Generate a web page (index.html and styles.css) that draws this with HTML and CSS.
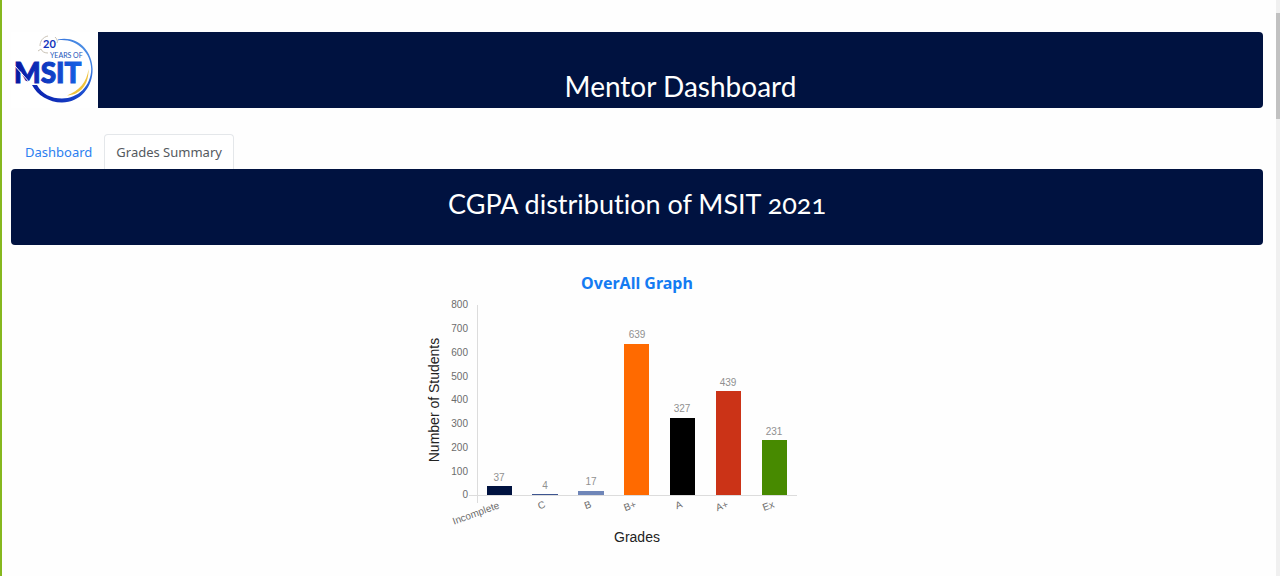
FILE: index.html
```html
<!DOCTYPE html>
<html lang="en">
<head>
<meta charset="utf-8">
<title>Mentor Dashboard</title>
<link rel="stylesheet" href="styles.css">
</head>
<body>
<main class="page">
  <header class="header">
    <svg class="logo" viewBox="11 32 87 76" role="img" aria-label="20 Years of MSIT">
      <defs>
        <linearGradient id="ring" x1="0" y1="1" x2="1" y2="0">
          <stop offset="0" stop-color="#0718a8"/>
          <stop offset="0.5" stop-color="#1c4fd0"/>
          <stop offset="1" stop-color="#5ba4ec"/>
        </linearGradient>
        <linearGradient id="word" x1="0" y1="0" x2="1" y2="0">
          <stop offset="0" stop-color="#0714a0"/>
          <stop offset="1" stop-color="#1763e6"/>
        </linearGradient>
      </defs>
      <path d="M58 39.400C77 35.500 92.300 50 92.600 69C93 87 80 102.500 62 102.500C49 102.500 37 95 32 85L37 85C42 94 51 98.500 62 98.500C78 98.500 91 86 91.200 69C91 52 76 38 58 40.200Z" fill="url(#ring)"/>
      <path d="M88.500 69C87 82 79 91 67 95.500C80 95 89 85 88.500 69Z" fill="#f0c33c"/>
      <path d="M40 46C40 41 43 37 48 36M55 37C57 39 58 41 57 43M41 49C42 52 45 53 48 53M38 51L41 49" fill="none" stroke="#c9c2b5" stroke-width="1"/>
      <text class="logo-number" x="43" y="48">20</text>
      <text class="logo-years" x="50" y="58">YEARS OF</text>
      <text class="logo-name" x="14" y="83" fill="url(#word)" stroke="url(#word)">MSIT</text>
      <path d="M15 66L30 83" stroke="#fff" stroke-width="1"/>
    </svg>
    <div class="banner banner-top"><h1 class="heading">Mentor Dashboard</h1></div>
  </header>
  <nav class="tabs" aria-label="Sections">
    <a class="tab" href="#dashboard">Dashboard</a>
    <a class="tab tab-active" href="#grades" aria-current="page">Grades Summary</a>
  </nav>
  <section id="grades">
    <div class="banner banner-section"><h2 class="heading heading-section">CGPA distribution of MSIT 2021</h2></div>
    <h3 class="graph-title">OverAll Graph</h3>
    <svg class="chart" viewBox="420 296 434 260" role="img" aria-label="Number of students by grade">
      <path d="M477 305V503M469 495H797" class="axis"/>
      <g class="tick">
        <text x="468" y="308">800</text>
        <text x="468" y="332">700</text>
        <text x="468" y="356">600</text>
        <text x="468" y="380">500</text>
        <text x="468" y="403">400</text>
        <text x="468" y="427">300</text>
        <text x="468" y="451">200</text>
        <text x="468" y="475">100</text>
        <text x="468" y="498">0</text>
      </g>
      <rect x="487" y="486" width="25" height="9" fill="#001240"/>
      <rect x="532" y="494" width="26" height="1" fill="#3d5590"/>
      <rect x="578" y="491" width="26" height="4" fill="#6f86b8"/>
      <rect x="624" y="344" width="25" height="151" fill="#ff6a00"/>
      <rect x="670" y="418" width="25" height="77" fill="#000"/>
      <rect x="716" y="391" width="25" height="104" fill="#cb3317"/>
      <rect x="762" y="440" width="25" height="55" fill="#478a00"/>
      <g class="value">
        <text x="499" y="481">37</text>
        <text x="545" y="489">4</text>
        <text x="591" y="485">17</text>
        <text x="637" y="338">639</text>
        <text x="682" y="412">327</text>
        <text x="728" y="386">439</text>
        <text x="774" y="435">231</text>
      </g>
      <g class="grade">
        <text transform="translate(500 508) rotate(-20)">Incomplete</text>
        <text transform="translate(546 507) rotate(-20)">C</text>
        <text transform="translate(592 507) rotate(-20)">B</text>
        <text transform="translate(637 507) rotate(-20)">B+</text>
        <text transform="translate(683 507) rotate(-20)">A</text>
        <text transform="translate(729 507) rotate(-20)">A+</text>
        <text transform="translate(775 507) rotate(-20)">Ex</text>
      </g>
      <text class="axis-title" x="637" y="542">Grades</text>
      <text class="axis-title" transform="translate(439 400) rotate(-90)">Number of Students</text>
    </svg>
  </section>
</main>
<div class="scroll-track" aria-hidden="true"><div class="scroll-thumb"></div></div>
</body>
</html>
```
FILE: styles.css
```css
* {
  box-sizing: border-box;
}

body {
  display: flex;
  min-height: 100vh;
  margin: 0;
  border-left: 2px solid #86b81e;
  background: #fefefe;
  font-family: "Noto Sans", "Open Sans", sans-serif;
}

.page {
  flex: 1;
  padding: 32px 13px 0 9px;
}

.header {
  display: flex;
  align-items: stretch;
}

.logo {
  flex: none;
  width: 87px;
  height: 76px;
  background: #fff;
}

.logo-number {
  fill: #1233bb;
  font: bold 11px Lato, sans-serif;
}

.logo-years {
  fill: #2355ba;
  font: 7px Lato, sans-serif;
}

.logo-name {
  font: 900 28px Lato, sans-serif;
  stroke-width: 1px;
}

.banner {
  display: flex;
  flex: 1;
  justify-content: center;
  min-height: 76px;
  border-radius: 4px;
  background: #001240;
  color: #fff;
}

.banner-top {
  align-items: flex-end;
  padding-bottom: 5px;
  border-radius: 0 4px 4px 0;
}

.banner-section {
  padding-top: 18px;
}

.heading {
  margin: 0;
  font: 28px/34px Lato, sans-serif;
  font-variant-ligatures: none;
  font-variant-numeric: oldstyle-nums;
}

.heading-section {
  font-size: 27px;
}

.tabs {
  display: flex;
  margin-top: 26px;
}

.tab {
  padding: 7px 11px;
  border: 1px solid transparent;
  border-bottom: 0;
  border-radius: 4px 4px 0 0;
  color: #2b7ff0;
  font-size: 13px;
  line-height: 20px;
  text-decoration: none;
}

.tab:first-child {
  padding-left: 13px;
}

.tab-active {
  border-color: #e4e7ea;
  background: #fff;
  color: #54595e;
}

.graph-title {
  margin: 26px 0 0;
  color: #147bf2;
  font-size: 16px;
  line-height: 25px;
  text-align: center;
}

.chart {
  display: block;
  width: 434px;
  height: 260px;
  margin: 0 auto;
  font-family: "Liberation Sans", Arial, sans-serif;
}

.axis {
  fill: none;
  stroke: #dcdcdc;
  stroke-width: 1px;
  shape-rendering: crispEdges;
}

.tick {
  fill: #6c6c6c;
  font-size: 10px;
  text-anchor: end;
}

.value {
  fill: #909090;
  font-size: 10px;
  text-anchor: middle;
}

.grade {
  fill: #6c6c6c;
  font-size: 10px;
  text-anchor: end;
}

.axis-title {
  fill: #222;
  font-size: 14px;
  text-anchor: middle;
}

.scroll-track {
  width: 4px;
  padding-top: 13px;
  background: #f0f0f0;
}

.scroll-thumb {
  height: 106px;
  background: #c1c1c1;
}
```
